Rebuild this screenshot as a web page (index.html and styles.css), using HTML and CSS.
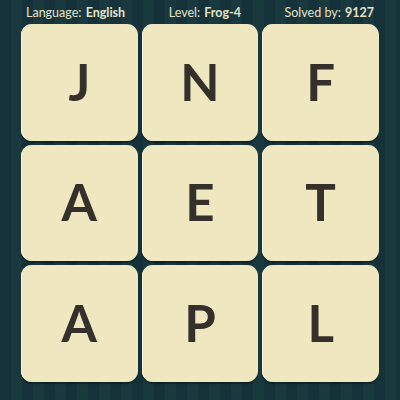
FILE: index.html
```html
<!DOCTYPE html>
<html>
<head>
<meta charset="utf-8">
<link rel="stylesheet" href="styles.css">
</head>
<body>
<div class="page">
  <div class="header">
    <span class="item">Language: <b>English</b></span>
    <span class="item">Level: <b>Frog-4</b></span>
    <span class="item">Solved by: <b>9127</b></span>
  </div>
  <div class="board">
    <div class="tile">J</div>
    <div class="tile">N</div>
    <div class="tile">F</div>
    <div class="tile">A</div>
    <div class="tile">E</div>
    <div class="tile">T</div>
    <div class="tile">A</div>
    <div class="tile">P</div>
    <div class="tile">L</div>
  </div>
</div>
</body>
</html>
```

FILE: styles.css
```css
html, body {
  margin: 0;
  padding: 0;
}
body {
  width: 400px;
  height: 400px;
  overflow: hidden;
  background: repeating-linear-gradient(90deg, #15323a 0px, #15323a 11px, #19393f 11px, #19393f 22px);
  font-family: "Lato", "Open Sans", sans-serif;
}
.page {
  width: 400px;
  height: 400px;
  display: flex;
  flex-direction: column;
}
.header {
  height: 24px;
  display: flex;
  justify-content: space-between;
  align-items: center;
  padding: 0 26px 0 26px;
  color: #e6e1c6;
  font-size: 12.5px;
  box-sizing: border-box;
}
.header b {
  font-weight: 700;
  margin-left: 1px;
}
.board {
  margin-left: 21px;
  width: 358px;
  height: 358px;
  display: grid;
  grid-template-columns: repeat(3, 1fr);
  grid-template-rows: repeat(3, 1fr);
  gap: 4px;
}
.tile {
  background: #efe7c0;
  border-radius: 11px;
  box-shadow: inset 1px 0 0 #fbf5d8, 0 2px 1px rgba(0,0,0,0.35);
  display: flex;
  align-items: center;
  justify-content: center;
  font-size: 51px;
  font-weight: 700;
  color: #35302b;
  padding-bottom: 2px;
}
```
